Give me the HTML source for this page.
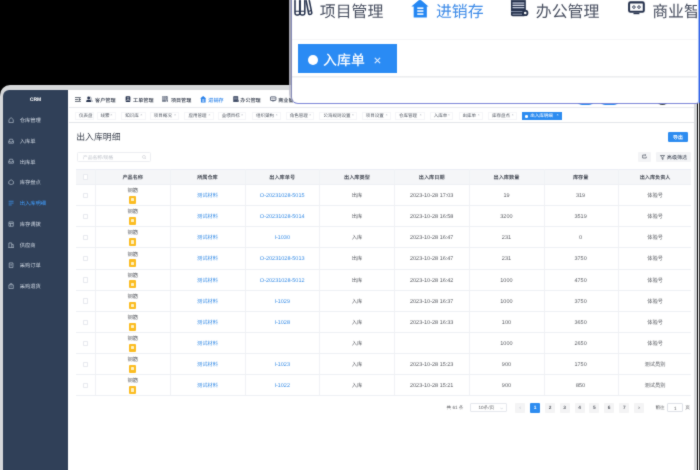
<!DOCTYPE html>
<html lang="zh-CN">
<head>
<meta charset="utf-8">
<title>CRM 出入库明细</title>
<style>
*{box-sizing:border-box;margin:0;padding:0}
html,body{width:700px;height:470px;overflow:hidden;background:#000}
body{position:relative;text-rendering:geometricPrecision;font-family:"Liberation Sans","Noto Sans CJK SC",sans-serif;color:#606266}
.a{position:absolute;white-space:nowrap}
#appwrap{left:0;top:0;width:700px;height:470px;filter:url(#soft)}
#popwrap{left:0;top:0;width:700px;height:470px;filter:url(#soft)}
#frame{left:0;top:85px;width:696.6px;height:400px;background:#d6d8da;border-radius:10px 0 0 0}
#frame2{left:-10px;top:96px;width:14px;height:390px;background:#d6d8da}
#main{left:3.4px;top:90.4px;width:690.3px;height:395px;background:#fff;border-radius:6px 0 0 0}
#side{left:3.4px;top:90.4px;width:65.1px;height:395px;background:#304058;border-radius:6px 0 0 0}
.logo{left:3px;top:97.2px;width:65px;text-align:center;color:#fff;font-weight:bold;font-size:5px;line-height:6px}
.mi{left:19.8px;height:10px;line-height:10px;color:#cdd5e0;font-size:5.25px}
.mi.on{color:#409eff}
.mic{left:8.4px;width:6.2px;height:6.2px;stroke:#b4bfcd;fill:none;stroke-width:1.1}
.mic.on{stroke:#409eff}
.navline{left:68.5px;top:107.2px;width:625px;height:0.7px;background:#e8eaed}
.nt{top:95.6px;height:10px;line-height:10px;font-size:5.1px;color:#2f3747;font-weight:500}
.nt.on{color:#2a82ea}
.tagsline{left:68.5px;top:121.6px;width:625px;height:0.8px;background:#e3e5e9}
.tg{top:111.8px;height:7.8px;line-height:5.6px;border:0.4px solid #f5f6f8;font-size:4.5px;color:#515762;background:#fff;text-align:left}
.tg i{font-style:normal;color:#a9aeb6;font-size:3.8px;position:absolute;right:2.2px;top:0}
.tg.on{background:#2d8cf0;border-color:#2d8cf0;color:#fff}
.tg.on i{color:#fff}
.tg.on b{position:absolute;left:2.5px;top:2.3px;width:2.6px;height:2.6px;border-radius:50%;background:#fff}
#title{left:76.2px;top:130.6px;font-size:8.9px;line-height:12px;color:#303744;font-weight:350}
#search{left:76.5px;top:151.5px;width:74px;height:10.5px;border:0.5px solid #eceef2;border-radius:1.5px;background:#fff}
#search span{position:absolute;left:5.3px;top:0;line-height:11.9px;height:9.5px;overflow:hidden;font-size:4.85px;color:#c3c7ce}
#export{left:667.5px;top:131.5px;width:20.8px;height:10px;background:#2d8cf0;border-radius:1.2px;color:#fff;font-size:4.9px;line-height:13px;overflow:hidden;text-align:center;font-weight:bold}
#refresh{left:637.5px;top:151.8px;width:13.3px;height:9.9px;background:#f3f4f6;border-radius:1.2px}
#filter{left:655.8px;top:151.8px;width:34.8px;height:9.9px;background:#f3f4f6;border-radius:1.2px;font-size:5.1px;line-height:13.4px;overflow:hidden;color:#2f3747;padding-left:11px}
/* table */
#thead{left:75.8px;top:168.9px;width:615.7px;height:15.4px;background:#f5f6f8;border-top:0.5px solid #ebeef5}
.hl{left:75.8px;width:615.7px;height:0.6px;background:#eef0f4}
.vl{top:168.9px;width:0.6px;height:226.8px;background:#f0f2f5}
.th{top:173.8px;height:9px;line-height:9px;font-size:5.15px;font-weight:bold;color:#4a4f59;text-align:center;width:74px}
.td{height:9px;line-height:9px;font-size:5.25px;color:#585b61;text-align:center;width:74px}
.td.l{color:#3a8ee6}
.td.n{font-size:5.5px}
.cb{left:82.6px;width:5.2px;height:5.2px;border:0.5px solid #e8eaef;border-radius:0.8px;background:#fff}
.pic{left:129.2px;width:6.5px;height:7.8px;background:#fbbd23;border-radius:1px}
.pic:after{content:"";position:absolute;left:2px;top:2.3px;width:2.5px;height:3.1px;background:#fef0c0;border-radius:0.6px}
/* pagination */
.pg{top:402.6px;height:10px;line-height:10px;font-size:4.6px;color:#606266;text-align:center}
.pb{top:402.6px;width:10.2px;height:10px;line-height:12px;overflow:hidden;font-size:4.8px;color:#5a5e66;background:#f4f4f5;border-radius:1px;text-align:center;font-weight:bold}
.pb.on{background:#2d8cf0;color:#fff}
/* popup */
#pop{left:291.3px;top:-10px;width:407.7px;height:114px;background:#fff;border:1.2px solid #b3b7dc;border-left:1px solid #8388b4;border-bottom-color:#7e87d8;border-right:1.4px solid #9ab6f3;border-radius:0 0 3px 7px;overflow:hidden}
#popl{left:289px;top:-10px;width:9px;height:112px;background:rgba(190,190,204,.85);border-radius:0 0 0 8px}
#popr{left:698.9px;top:-10px;width:3px;height:113.8px;background:#3564e6;border-radius:0 0 0 3px}
.pl1{left:292px;top:38.6px;width:405px;height:1px;background:#f6f6f7}
.pl2{left:292px;top:76.4px;width:405px;height:2px;background:linear-gradient(#e9eaec,#f7f7f8)}
.pt{top:2.6px;height:20px;line-height:20px;font-size:15.9px;color:#4a5162}
.pt.on{color:#3f8ce8}
#ptag{left:298.1px;top:44.2px;width:98.7px;height:29.1px;background:#2a8bf4}
#ptag .d{position:absolute;left:10.4px;top:10.9px;width:9.9px;height:9.9px;border-radius:50%;background:#fff}
#ptag .t{position:absolute;left:25px;top:5.8px;line-height:20px;font-size:13.9px;color:#fff;font-weight:500}
#ptag .x{position:absolute;left:75.3px;top:6.8px;line-height:20px;font-size:13.5px;color:#dcebff}
</style>
</head>
<body>
<svg width="0" height="0" style="position:absolute"><defs><filter id="soft" x="0" y="0" width="100%" height="100%" color-interpolation-filters="sRGB"><feConvolveMatrix order="3" kernelMatrix="1 3 1 3 24 3 1 3 1" divisor="40" edgeMode="duplicate" preserveAlpha="false"/></filter></defs></svg>
<div id="appwrap" class="a">
<div id="frame" class="a"></div><div id="frame2" class="a"></div>
<div id="main" class="a"></div>
<div id="side" class="a"></div>
<div class="a" style="left:698px;top:100px;width:1px;height:380px;background:#fff"></div><div class="a" style="left:699px;top:100px;width:3px;height:380px;background:#3a3a3a"></div>
<div class="a logo">CRM</div>
<svg class="a mic" style="top:116.90px" viewBox="0 0 10 10"><path d="M1.5 4.2 L5 1 L8.5 4.2 V9 H1.5 Z"/></svg>
<div class="a mi" style="top:116.00px">仓库管理</div>
<svg class="a mic" style="top:137.68px" viewBox="0 0 10 10"><path d="M1.2 5.6 L2.8 2 H7.2 L8.8 5.6 V8.4 H1.2 Z M1.2 5.6 H3.6 L4.2 6.8 H5.8 L6.4 5.6 H8.8"/></svg>
<div class="a mi" style="top:136.78px">入库单</div>
<svg class="a mic" style="top:158.46px" viewBox="0 0 10 10"><path d="M1.2 5.6 L2.8 2 H7.2 L8.8 5.6 V8.4 H1.2 Z M1.2 5.6 H3.6 L4.2 6.8 H5.8 L6.4 5.6 H8.8"/></svg>
<div class="a mi" style="top:157.56px">出库单</div>
<svg class="a mic" style="top:179.24px" viewBox="0 0 10 10"><path d="M5 1.2 L8.8 4 V7.6 L5 9 L1.2 7.6 V4 Z"/></svg>
<div class="a mi" style="top:178.34px">库存盘点</div>
<svg class="a mic on" style="top:200.02px" viewBox="0 0 10 10"><path d="M1 2 H9 M1 5 H9 M1 8 H6"/></svg>
<div class="a mi on" style="top:199.12px">出入库明细</div>
<svg class="a mic" style="top:220.80px" viewBox="0 0 10 10"><path d="M1.5 1.5 H8.5 V8.5 H1.5 Z M1.5 4 H8.5 M4 4 V8.5"/></svg>
<div class="a mi" style="top:219.90px">库存调拨</div>
<svg class="a mic" style="top:241.58px" viewBox="0 0 10 10"><path d="M1.5 9 V1.5 H6 V9 M6 4 H8.5 V9 M0.5 9 H9.5"/></svg>
<div class="a mi" style="top:240.68px">供应商</div>
<svg class="a mic" style="top:262.36px" viewBox="0 0 10 10"><path d="M2 1.5 H8 V9 H2 Z M4 4 H6 M4 6 H6"/></svg>
<div class="a mi" style="top:261.46px">采购订单</div>
<svg class="a mic" style="top:283.14px" viewBox="0 0 10 10"><path d="M1.5 3 H8.5 V9 H1.5 Z M3.5 3 V1.2 H6.5 V3 M5 5 V7"/></svg>
<div class="a mi" style="top:282.24px">采购退货</div>
<div class="a navline"></div>
<svg class="a" style="left:75.2px;top:97.2px;width:5.8px;height:5px" viewBox="0 0 12 10"><path d="M0 1 H12 M0 5 H7 M0 9 H12 M9 3.2 V6.8 L11.5 5 Z" stroke="#2f3747" stroke-width="1.5" fill="#2f3747"/></svg>
<svg class="a" style="left:86.3px;top:95.8px;width:6.3px;height:6.30px;overflow:hidden" viewBox="0 0 20 20"><circle cx="8.5" cy="6" r="4.6" fill="#26324d"/><path d="M0.5 19 C0.5 13 4 11 8.5 11 C13 11 16.5 13 16.5 19 Z" fill="#26324d"/><path d="M14 3 C17 4 17 9 14.5 10.5 C18 11.5 19.8 14 19.8 18 H18" fill="none" stroke="#26324d" stroke-width="1.6"/></svg>
<div class="a nt" style="left:95.1px">客户管理</div>
<svg class="a" style="left:125.0px;top:95.8px;width:6.3px;height:6.30px;overflow:hidden" viewBox="0 0 20 20"><rect x="2" y="1" width="15" height="18" rx="2.5" fill="#26324d"/><rect x="6" y="5" width="7.5" height="2" fill="#fff"/><rect x="6" y="9.2" width="7.5" height="2" fill="#fff"/><rect x="2" y="14.4" width="15" height="1.3" fill="#fff"/></svg>
<div class="a nt" style="left:133.1px">工单管理</div>
<svg class="a" style="left:162.10000000000002px;top:95.8px;width:6.3px;height:6.30px;overflow:hidden" viewBox="0 0 20 20"><g fill="none" stroke="#26324d" stroke-width="1.7" stroke-linejoin="round"><rect x="1.1" y="-2" width="5.2" height="20.6" rx="1.8"/><rect x="6.7" y="-2" width="5.2" height="20.6" rx="1.8"/><path d="M13 1.2 L16.3 0.2 L19.6 16.6 C19.2 18 17 18.6 16.2 17.6 Z"/><path d="M1.1 14.6 H6.3 M6.7 14.6 H11.9 M15.6 14.8 L19 13.8" stroke-width="1.2"/></g></svg>
<div class="a nt" style="left:170.9px">项目管理</div>
<svg class="a" style="left:200.4px;top:95.8px;width:6.3px;height:6.93px;overflow:hidden" viewBox="0 0 20 22"><path d="M10 0.2 L19.6 8.3 H17.7 V20.6 H3 V8.3 H0.4 Z" fill="#2a82ea"/><rect x="7" y="9.4" width="6.9" height="1.7" fill="#fff"/><rect x="7" y="12.6" width="6.9" height="1.7" fill="#fff"/><rect x="7" y="16" width="6.9" height="1.7" fill="#fff"/></svg>
<div class="a nt on" style="left:208.3px">进销存</div>
<svg class="a" style="left:232.60000000000002px;top:95.8px;width:6.3px;height:6.30px;overflow:hidden" viewBox="0 0 20 20"><rect x="1" y="0.5" width="15.5" height="18.5" rx="1.8" fill="#26324d"/><rect x="2.6" y="4.6" width="12.3" height="1.3" fill="#c3cbdc"/><rect x="2.6" y="7" width="12.3" height="1.3" fill="#dfe4ee"/><rect x="2.6" y="9.4" width="12.3" height="1.3" fill="#c3cbdc"/><rect x="1" y="13.6" width="15.5" height="0.9" fill="#8c97b0"/><rect x="2.6" y="16.4" width="10" height="0.9" fill="#aab3c8"/><circle cx="15.9" cy="15.6" r="2.3" fill="#fff" stroke="#26324d" stroke-width="1.9"/></svg>
<div class="a nt" style="left:240.3px">办公管理</div>
<svg class="a" style="left:270.3px;top:95.8px;width:6.3px;height:6.30px;overflow:hidden" viewBox="0 0 20 20"><rect x="1.3" y="2.8" width="17.4" height="11.2" rx="1.6" fill="#fff" stroke="#26324d" stroke-width="2.4"/><circle cx="7" cy="8.4" r="1.5" fill="none" stroke="#26324d" stroke-width="1.1"/><circle cx="13" cy="8.4" r="1.5" fill="none" stroke="#26324d" stroke-width="1.1"/><rect x="6.5" y="15.2" width="7" height="1.6" fill="#26324d"/></svg>
<div class="a nt" style="left:278.2px">商业智能</div>
<div class="a" style="left:577px;top:94.9px;width:17px;height:10px;border-radius:5px;background:#2d8cf0"></div>
<div class="a" style="left:600px;top:94.9px;width:19px;height:10px;border-radius:5px;background:#2d8cf0"></div>
<div class="a" style="left:657px;top:94.1px;width:11.4px;height:11.4px;border-radius:50%;background:#3c4648"></div>
<div class="a tagsline"></div>
<div class="a tg" style="left:74.9px;width:18.7px;padding-left:3px">仪表盘</div>
<div class="a tg" style="left:96.6px;width:19.0px;padding-left:3px">线索<i>×</i></div>
<div class="a tg" style="left:121.2px;width:24.5px;padding-left:3px">知识库<i>×</i></div>
<div class="a tg" style="left:149.8px;width:29.6px;padding-left:3px">项目概况<i>×</i></div>
<div class="a tg" style="left:184.4px;width:29.2px;padding-left:3px">应用管理<i>×</i></div>
<div class="a tg" style="left:217.7px;width:28.7px;padding-left:3px">业绩目标<i>×</i></div>
<div class="a tg" style="left:252px;width:29.0px;padding-left:3px">组织架构<i>×</i></div>
<div class="a tg" style="left:285.8px;width:28.7px;padding-left:3px">角色管理<i>×</i></div>
<div class="a tg" style="left:319.4px;width:37.7px;padding-left:3px">公海规则设置<i>×</i></div>
<div class="a tg" style="left:361.7px;width:29.3px;padding-left:3px">项目设置<i>×</i></div>
<div class="a tg" style="left:395px;width:30.0px;padding-left:3px">仓库管理<i>×</i></div>
<div class="a tg" style="left:429.7px;width:23.5px;padding-left:3px">入库单<i>×</i></div>
<div class="a tg" style="left:458.6px;width:24.4px;padding-left:3px">出库单<i>×</i></div>
<div class="a tg" style="left:487.9px;width:29.1px;padding-left:3px">库存盘点<i>×</i></div>
<div class="a tg on" style="left:521.5px;width:40.3px;padding-left:7.7px"><b></b>出入库明细<i>×</i></div>
<div id="title" class="a">出入库明细</div>
<div id="search" class="a"><span>产品名称/规格</span><svg style="position:absolute;right:3.2px;top:2.6px;width:4.6px;height:4.6px" viewBox="0 0 10 10"><circle cx="4.2" cy="4.2" r="3.2" fill="none" stroke="#c3c7ce" stroke-width="1.1"/><path d="M6.6 6.6 L9.4 9.4" stroke="#c3c7ce" stroke-width="1.1"/></svg></div>
<div id="export" class="a">导出</div>
<div id="refresh" class="a"><svg style="position:absolute;left:4.6px;top:2.2px;width:4.8px;height:4.8px" viewBox="0 0 10 10"><path d="M8.8 5.4 V8.4 H1.4 V2.2 H7.4 M5.8 0.4 L7.8 2.2 L5.8 4" fill="none" stroke="#2f3747" stroke-width="1.2"/></svg></div>
<div id="filter" class="a"><svg style="position:absolute;left:3.9px;top:2.8px;width:5px;height:5px" viewBox="0 0 10 10"><path d="M0.8 1 H9.2 L6 4.8 V9 L4 7.6 V4.8 Z" fill="none" stroke="#2f3747" stroke-width="1.2"/></svg>高级筛选</div>
<div id="thead" class="a"></div>
<div class="a cb" style="top:174.4px"></div>
<div class="a th" style="left:95.70px">产品名称</div>
<div class="a th" style="left:170.45px">所属仓库</div>
<div class="a th" style="left:245.20px">出入库单号</div>
<div class="a th" style="left:319.95px">出入库类型</div>
<div class="a th" style="left:394.70px">出入库日期</div>
<div class="a th" style="left:469.45px">出入库数量</div>
<div class="a th" style="left:543.60px">库存量</div>
<div class="a th" style="left:618.05px">出入库负责人</div>
<div class="a vl" style="left:95.00px"></div>
<div class="a vl" style="left:169.75px"></div>
<div class="a vl" style="left:244.50px"></div>
<div class="a vl" style="left:319.25px"></div>
<div class="a vl" style="left:394.00px"></div>
<div class="a vl" style="left:468.75px"></div>
<div class="a vl" style="left:543.50px"></div>
<div class="a vl" style="left:618.25px"></div>
<div class="a hl" style="top:184.00px"></div>
<div class="a cb" style="top:192.77px"></div>
<div class="a td" style="left:95.70px;top:187.20px">钢筋</div>
<div class="a pic" style="top:195.90px"></div>
<div class="a td l" style="left:170.45px;top:192.07px">测试材料</div>
<div class="a td l n" style="left:245.20px;top:192.07px">O-20231028-5015</div>
<div class="a td" style="left:319.95px;top:192.07px">出库</div>
<div class="a td n" style="left:394.70px;top:192.07px">2023-10-28 17:03</div>
<div class="a td n" style="left:469.45px;top:192.07px">19</div>
<div class="a td n" style="left:543.60px;top:192.07px">319</div>
<div class="a td" style="left:618.05px;top:192.07px">体验号</div>
<div class="a hl" style="top:205.14px"></div>
<div class="a cb" style="top:213.91px"></div>
<div class="a td" style="left:95.70px;top:208.34px">钢筋</div>
<div class="a pic" style="top:217.04px"></div>
<div class="a td l" style="left:170.45px;top:213.21px">测试材料</div>
<div class="a td l n" style="left:245.20px;top:213.21px">O-20231028-5014</div>
<div class="a td" style="left:319.95px;top:213.21px">出库</div>
<div class="a td n" style="left:394.70px;top:213.21px">2023-10-28 16:58</div>
<div class="a td n" style="left:469.45px;top:213.21px">3200</div>
<div class="a td n" style="left:543.60px;top:213.21px">3519</div>
<div class="a td" style="left:618.05px;top:213.21px">体验号</div>
<div class="a hl" style="top:226.28px"></div>
<div class="a cb" style="top:235.05px"></div>
<div class="a td" style="left:95.70px;top:229.48px">钢筋</div>
<div class="a pic" style="top:238.18px"></div>
<div class="a td l" style="left:170.45px;top:234.35px">测试材料</div>
<div class="a td l n" style="left:245.20px;top:234.35px">I-1030</div>
<div class="a td" style="left:319.95px;top:234.35px">入库</div>
<div class="a td n" style="left:394.70px;top:234.35px">2023-10-28 16:47</div>
<div class="a td n" style="left:469.45px;top:234.35px">231</div>
<div class="a td n" style="left:543.60px;top:234.35px">0</div>
<div class="a td" style="left:618.05px;top:234.35px">体验号</div>
<div class="a hl" style="top:247.42px"></div>
<div class="a cb" style="top:256.19px"></div>
<div class="a td" style="left:95.70px;top:250.62px">钢筋</div>
<div class="a pic" style="top:259.32px"></div>
<div class="a td l" style="left:170.45px;top:255.49px">测试材料</div>
<div class="a td l n" style="left:245.20px;top:255.49px">O-20231028-5013</div>
<div class="a td" style="left:319.95px;top:255.49px">出库</div>
<div class="a td n" style="left:394.70px;top:255.49px">2023-10-28 16:47</div>
<div class="a td n" style="left:469.45px;top:255.49px">231</div>
<div class="a td n" style="left:543.60px;top:255.49px">3750</div>
<div class="a td" style="left:618.05px;top:255.49px">体验号</div>
<div class="a hl" style="top:268.56px"></div>
<div class="a cb" style="top:277.33px"></div>
<div class="a td" style="left:95.70px;top:271.76px">钢筋</div>
<div class="a pic" style="top:280.46px"></div>
<div class="a td l" style="left:170.45px;top:276.63px">测试材料</div>
<div class="a td l n" style="left:245.20px;top:276.63px">O-20231028-5012</div>
<div class="a td" style="left:319.95px;top:276.63px">出库</div>
<div class="a td n" style="left:394.70px;top:276.63px">2023-10-28 16:42</div>
<div class="a td n" style="left:469.45px;top:276.63px">1000</div>
<div class="a td n" style="left:543.60px;top:276.63px">4750</div>
<div class="a td" style="left:618.05px;top:276.63px">体验号</div>
<div class="a hl" style="top:289.70px"></div>
<div class="a cb" style="top:298.47px"></div>
<div class="a td" style="left:95.70px;top:292.90px">钢筋</div>
<div class="a pic" style="top:301.60px"></div>
<div class="a td l" style="left:170.45px;top:297.77px">测试材料</div>
<div class="a td l n" style="left:245.20px;top:297.77px">I-1029</div>
<div class="a td" style="left:319.95px;top:297.77px">入库</div>
<div class="a td n" style="left:394.70px;top:297.77px">2023-10-28 16:37</div>
<div class="a td n" style="left:469.45px;top:297.77px">1000</div>
<div class="a td n" style="left:543.60px;top:297.77px">3750</div>
<div class="a td" style="left:618.05px;top:297.77px">体验号</div>
<div class="a hl" style="top:310.84px"></div>
<div class="a cb" style="top:319.61px"></div>
<div class="a td" style="left:95.70px;top:314.04px">钢筋</div>
<div class="a pic" style="top:322.74px"></div>
<div class="a td l" style="left:170.45px;top:318.91px">测试材料</div>
<div class="a td l n" style="left:245.20px;top:318.91px">I-1028</div>
<div class="a td" style="left:319.95px;top:318.91px">入库</div>
<div class="a td n" style="left:394.70px;top:318.91px">2023-10-28 16:33</div>
<div class="a td n" style="left:469.45px;top:318.91px">100</div>
<div class="a td n" style="left:543.60px;top:318.91px">3650</div>
<div class="a td" style="left:618.05px;top:318.91px">体验号</div>
<div class="a hl" style="top:331.98px"></div>
<div class="a cb" style="top:340.75px"></div>
<div class="a td" style="left:95.70px;top:335.18px">钢筋</div>
<div class="a pic" style="top:343.88px"></div>
<div class="a td l" style="left:170.45px;top:340.05px">测试材料</div>
<div class="a td" style="left:319.95px;top:340.05px">入库</div>
<div class="a td n" style="left:469.45px;top:340.05px">1000</div>
<div class="a td n" style="left:543.60px;top:340.05px">2650</div>
<div class="a td" style="left:618.05px;top:340.05px">体验号</div>
<div class="a hl" style="top:353.12px"></div>
<div class="a cb" style="top:361.89px"></div>
<div class="a td" style="left:95.70px;top:356.32px">钢筋</div>
<div class="a pic" style="top:365.02px"></div>
<div class="a td l" style="left:170.45px;top:361.19px">测试材料</div>
<div class="a td l n" style="left:245.20px;top:361.19px">I-1023</div>
<div class="a td" style="left:319.95px;top:361.19px">入库</div>
<div class="a td n" style="left:394.70px;top:361.19px">2023-10-28 15:23</div>
<div class="a td n" style="left:469.45px;top:361.19px">900</div>
<div class="a td n" style="left:543.60px;top:361.19px">1750</div>
<div class="a td" style="left:618.05px;top:361.19px">测试员别</div>
<div class="a hl" style="top:374.26px"></div>
<div class="a cb" style="top:383.03px"></div>
<div class="a td" style="left:95.70px;top:377.46px">钢筋</div>
<div class="a pic" style="top:386.16px"></div>
<div class="a td l" style="left:170.45px;top:382.33px">测试材料</div>
<div class="a td l n" style="left:245.20px;top:382.33px">I-1022</div>
<div class="a td" style="left:319.95px;top:382.33px">入库</div>
<div class="a td n" style="left:394.70px;top:382.33px">2023-10-28 15:21</div>
<div class="a td n" style="left:469.45px;top:382.33px">900</div>
<div class="a td n" style="left:543.60px;top:382.33px">850</div>
<div class="a td" style="left:618.05px;top:382.33px">测试员别</div>
<div class="a hl" style="top:395.40px"></div>
<div class="a pg" style="left:440px;width:30px">共 61 条</div>
<div class="a pg" style="left:470px;top:402.8px;width:37px;height:9.6px;line-height:7px;border:0.5px solid #e6e8ed;border-radius:1px;text-align:left;padding-left:7.5px">10条/页<svg style="position:absolute;right:3px;top:3.2px;width:3.4px;height:3px" viewBox="0 0 10 8"><path d="M1 1.5 L5 6 L9 1.5" fill="none" stroke="#c0c4cc" stroke-width="1.4"/></svg></div>
<div class="a pb" style="left:514.9px;color:#c0c4cc;">‹</div>
<div class="a pb on" style="left:529.9px;">1</div>
<div class="a pb" style="left:544.9px;">2</div>
<div class="a pb" style="left:559.6px;">3</div>
<div class="a pb" style="left:574.5px;">4</div>
<div class="a pb" style="left:589.3px;">5</div>
<div class="a pb" style="left:604.1px;">6</div>
<div class="a pb" style="left:619.2px;">7</div>
<div class="a pb" style="left:633.9px;">›</div>
<div class="a pg" style="left:653.5px;width:13px">前往</div>
<div class="a pg" style="left:667.4px;top:402.8px;width:15.6px;height:9.6px;line-height:9px;border:0.5px solid #dfe2e8;border-radius:1px">1</div>
<div class="a pg" style="left:684.5px;width:6px">页</div>
</div>
<div id="popwrap" class="a">
<div id="popl" class="a"></div><div id="popr" class="a"></div><div id="pop" class="a"></div>
<div class="a pl1"></div><div class="a pl2"></div>
<div class="a" style="left:292.2px;top:0;width:405.2px;height:38px;overflow:hidden">
<svg class="a" style="left:2.2px;top:-1.8px;width:18.2px;height:18.20px;overflow:hidden" viewBox="0 0 20 20"><g fill="none" stroke="#26324d" stroke-width="1.7" stroke-linejoin="round"><rect x="1.1" y="-2" width="5.2" height="20.6" rx="1.8"/><rect x="6.7" y="-2" width="5.2" height="20.6" rx="1.8"/><path d="M13 1.2 L16.3 0.2 L19.6 16.6 C19.2 18 17 18.6 16.2 17.6 Z"/><path d="M1.1 14.6 H6.3 M6.7 14.6 H11.9 M15.6 14.8 L19 13.8" stroke-width="1.2"/></g></svg>
<div class="a pt" style="left:27.6px">项目管理</div>
<svg class="a" style="left:118.5px;top:-1.4px;width:17.9px;height:19.69px;overflow:hidden" viewBox="0 0 20 22"><path d="M10 0.2 L19.6 8.3 H17.7 V20.6 H3 V8.3 H0.4 Z" fill="#2487f3"/><rect x="7" y="9.4" width="6.9" height="1.7" fill="#fff"/><rect x="7" y="12.6" width="6.9" height="1.7" fill="#fff"/><rect x="7" y="16" width="6.9" height="1.7" fill="#fff"/></svg>
<div class="a pt on" style="left:143.8px">进销存</div>
<svg class="a" style="left:217.8px;top:-2.0px;width:19.2px;height:19.20px;overflow:hidden" viewBox="0 0 20 20"><rect x="1" y="0.5" width="15.5" height="18.5" rx="1.8" fill="#26324d"/><rect x="2.6" y="4.6" width="12.3" height="1.3" fill="#c3cbdc"/><rect x="2.6" y="7" width="12.3" height="1.3" fill="#dfe4ee"/><rect x="2.6" y="9.4" width="12.3" height="1.3" fill="#c3cbdc"/><rect x="1" y="13.6" width="15.5" height="0.9" fill="#8c97b0"/><rect x="2.6" y="16.4" width="10" height="0.9" fill="#aab3c8"/><circle cx="15.9" cy="15.6" r="2.3" fill="#fff" stroke="#26324d" stroke-width="1.9"/></svg>
<div class="a pt" style="left:243.6px">办公管理</div>
<svg class="a" style="left:335.6px;top:0.3px;width:16.9px;height:16.90px;overflow:hidden" viewBox="0 0 20 20"><rect x="1.3" y="2.8" width="17.4" height="11.2" rx="1.6" fill="#fff" stroke="#26324d" stroke-width="2.4"/><circle cx="7" cy="8.4" r="1.5" fill="none" stroke="#26324d" stroke-width="1.1"/><circle cx="13" cy="8.4" r="1.5" fill="none" stroke="#26324d" stroke-width="1.1"/><rect x="6.5" y="15.2" width="7" height="1.6" fill="#26324d"/></svg>
<div class="a pt" style="left:360.0px">商业智能</div>
</div>
<div id="ptag" class="a"><div class="d"></div><div class="t">入库单</div><div class="x">×</div></div>
</div>
</body>
</html>
